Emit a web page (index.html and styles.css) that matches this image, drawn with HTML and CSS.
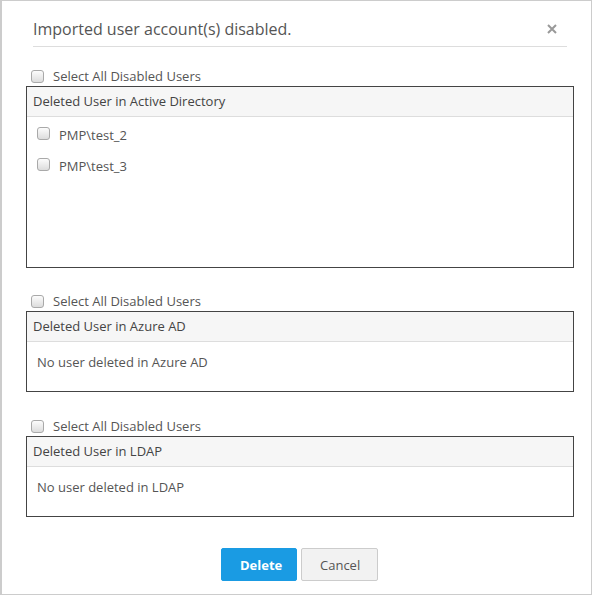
FILE: index.html
```html
<!DOCTYPE html>
<html lang="en">
<head>
  <meta charset="UTF-8" />
  <title>Imported user account(s) disabled</title>
  <link rel="stylesheet" href="styles.css">
</head>
<body>
  <div class="dialog">
    <div class="dialog-header">
      <h2>Imported user account(s) disabled.</h2>
      <button class="close" type="button" aria-label="Close">
        <svg width="10" height="10" viewBox="0 0 10 10">
          <path d="M1 1 L9 9 M9 1 L1 9" stroke="#999" stroke-width="2" fill="none" />
        </svg>
      </button>
    </div>

    <div class="section first">
      <label class="select-all"><input type="checkbox" /> Select All Disabled Users</label>
      <div class="user-box">
        <div class="user-box-title">Deleted User in Active Directory</div>
        <div class="user-box-body tall">
          <label class="user-row"><input type="checkbox" /> PMP\test_2</label>
          <label class="user-row"><input type="checkbox" /> PMP\test_3</label>
        </div>
      </div>
    </div>

    <div class="section">
      <label class="select-all"><input type="checkbox" /> Select All Disabled Users</label>
      <div class="user-box">
        <div class="user-box-title">Deleted User in Azure AD</div>
        <div class="user-box-body">
          <p class="empty">No user deleted in Azure AD</p>
        </div>
      </div>
    </div>

    <div class="section last">
      <label class="select-all"><input type="checkbox" /> Select All Disabled Users</label>
      <div class="user-box">
        <div class="user-box-title">Deleted User in LDAP</div>
        <div class="user-box-body">
          <p class="empty">No user deleted in LDAP</p>
        </div>
      </div>
    </div>

    <div class="dialog-footer">
      <button class="btn btn-primary" type="button">Delete</button>
      <button class="btn btn-default" type="button">Cancel</button>
    </div>
  </div>
</body>
</html>
```

FILE: styles.css
```css
body {
  margin: 0;
  padding: 0;
  font-family: "Open Sans", sans-serif;
  font-size: 13px;
  color: #555;
  background: #fff;
}
.dialog {
  width: 592px;
  height: 595px;
  box-sizing: border-box;
  border: 1px solid #ccc;
  border-left-width: 2px;
  background: #fff;
}
.dialog-header {
  display: flex;
  align-items: center;
  justify-content: space-between;
  margin: 0 24px 0 31px;
  padding: 16px 0 5px;
  border-bottom: 1px solid #ddd;
}
.dialog-header h2 {
  margin: 0;
  font-size: 16px;
  font-weight: normal;
  line-height: 24px;
  color: #555;
}
.close {
  border: none;
  background: none;
  padding: 0;
  margin-right: 10px;
  width: 10px;
  height: 10px;
  display: flex;
  cursor: pointer;
}
.section {
  margin: 23px 17px 0 24px;
}
.section.first {
  margin-top: 19px;
}
.section.last {
  margin-top: 24px;
}
input[type="checkbox"] {
  appearance: none;
  -webkit-appearance: none;
  width: 13px;
  height: 13px;
  margin: 0;
  box-sizing: border-box;
  border: 1px solid #a9a9a9;
  border-radius: 3px;
  background: linear-gradient(#fcfcfc, #dcdcdc);
  flex-shrink: 0;
}
.select-all {
  display: flex;
  align-items: center;
  gap: 9px;
  height: 20px;
  padding-left: 5px;
  line-height: 20px;
}
.user-box {
  border: 1px solid #444;
}
.user-box-title {
  padding: 4px 6px 5px;
  line-height: 20px;
  background: #f6f6f6;
  border-bottom: 1px solid #ddd;
  color: #444;
}
.user-box-body {
  height: 49px;
  box-sizing: border-box;
  padding: 10px 10px 0;
}
.user-box-body.tall {
  height: 150px;
  padding-top: 8px;
}
.user-row {
  display: flex;
  align-items: center;
  gap: 9px;
  line-height: 20px;
  margin-bottom: 11px;
}
.user-row input {
  margin-top: -3px;
}
.empty {
  margin: 0;
  line-height: 20px;
}
.dialog-footer {
  display: flex;
  justify-content: center;
  gap: 4px;
  margin-top: 31px;
  padding-left: 6px;
}
.btn {
  height: 33px;
  padding: 0 18px;
  font-family: "Open Sans", sans-serif;
  font-size: 13px;
  border-radius: 2px;
  cursor: pointer;
}
.btn-primary {
  width: 76px;
  background: #1a9be3;
  border: 1px solid #1a9be3;
  color: #fff;
  font-weight: bold;
}
.btn-default {
  width: 77px;
  background: #f2f2f2;
  border: 1px solid #ccc;
  color: #555;
}
```
